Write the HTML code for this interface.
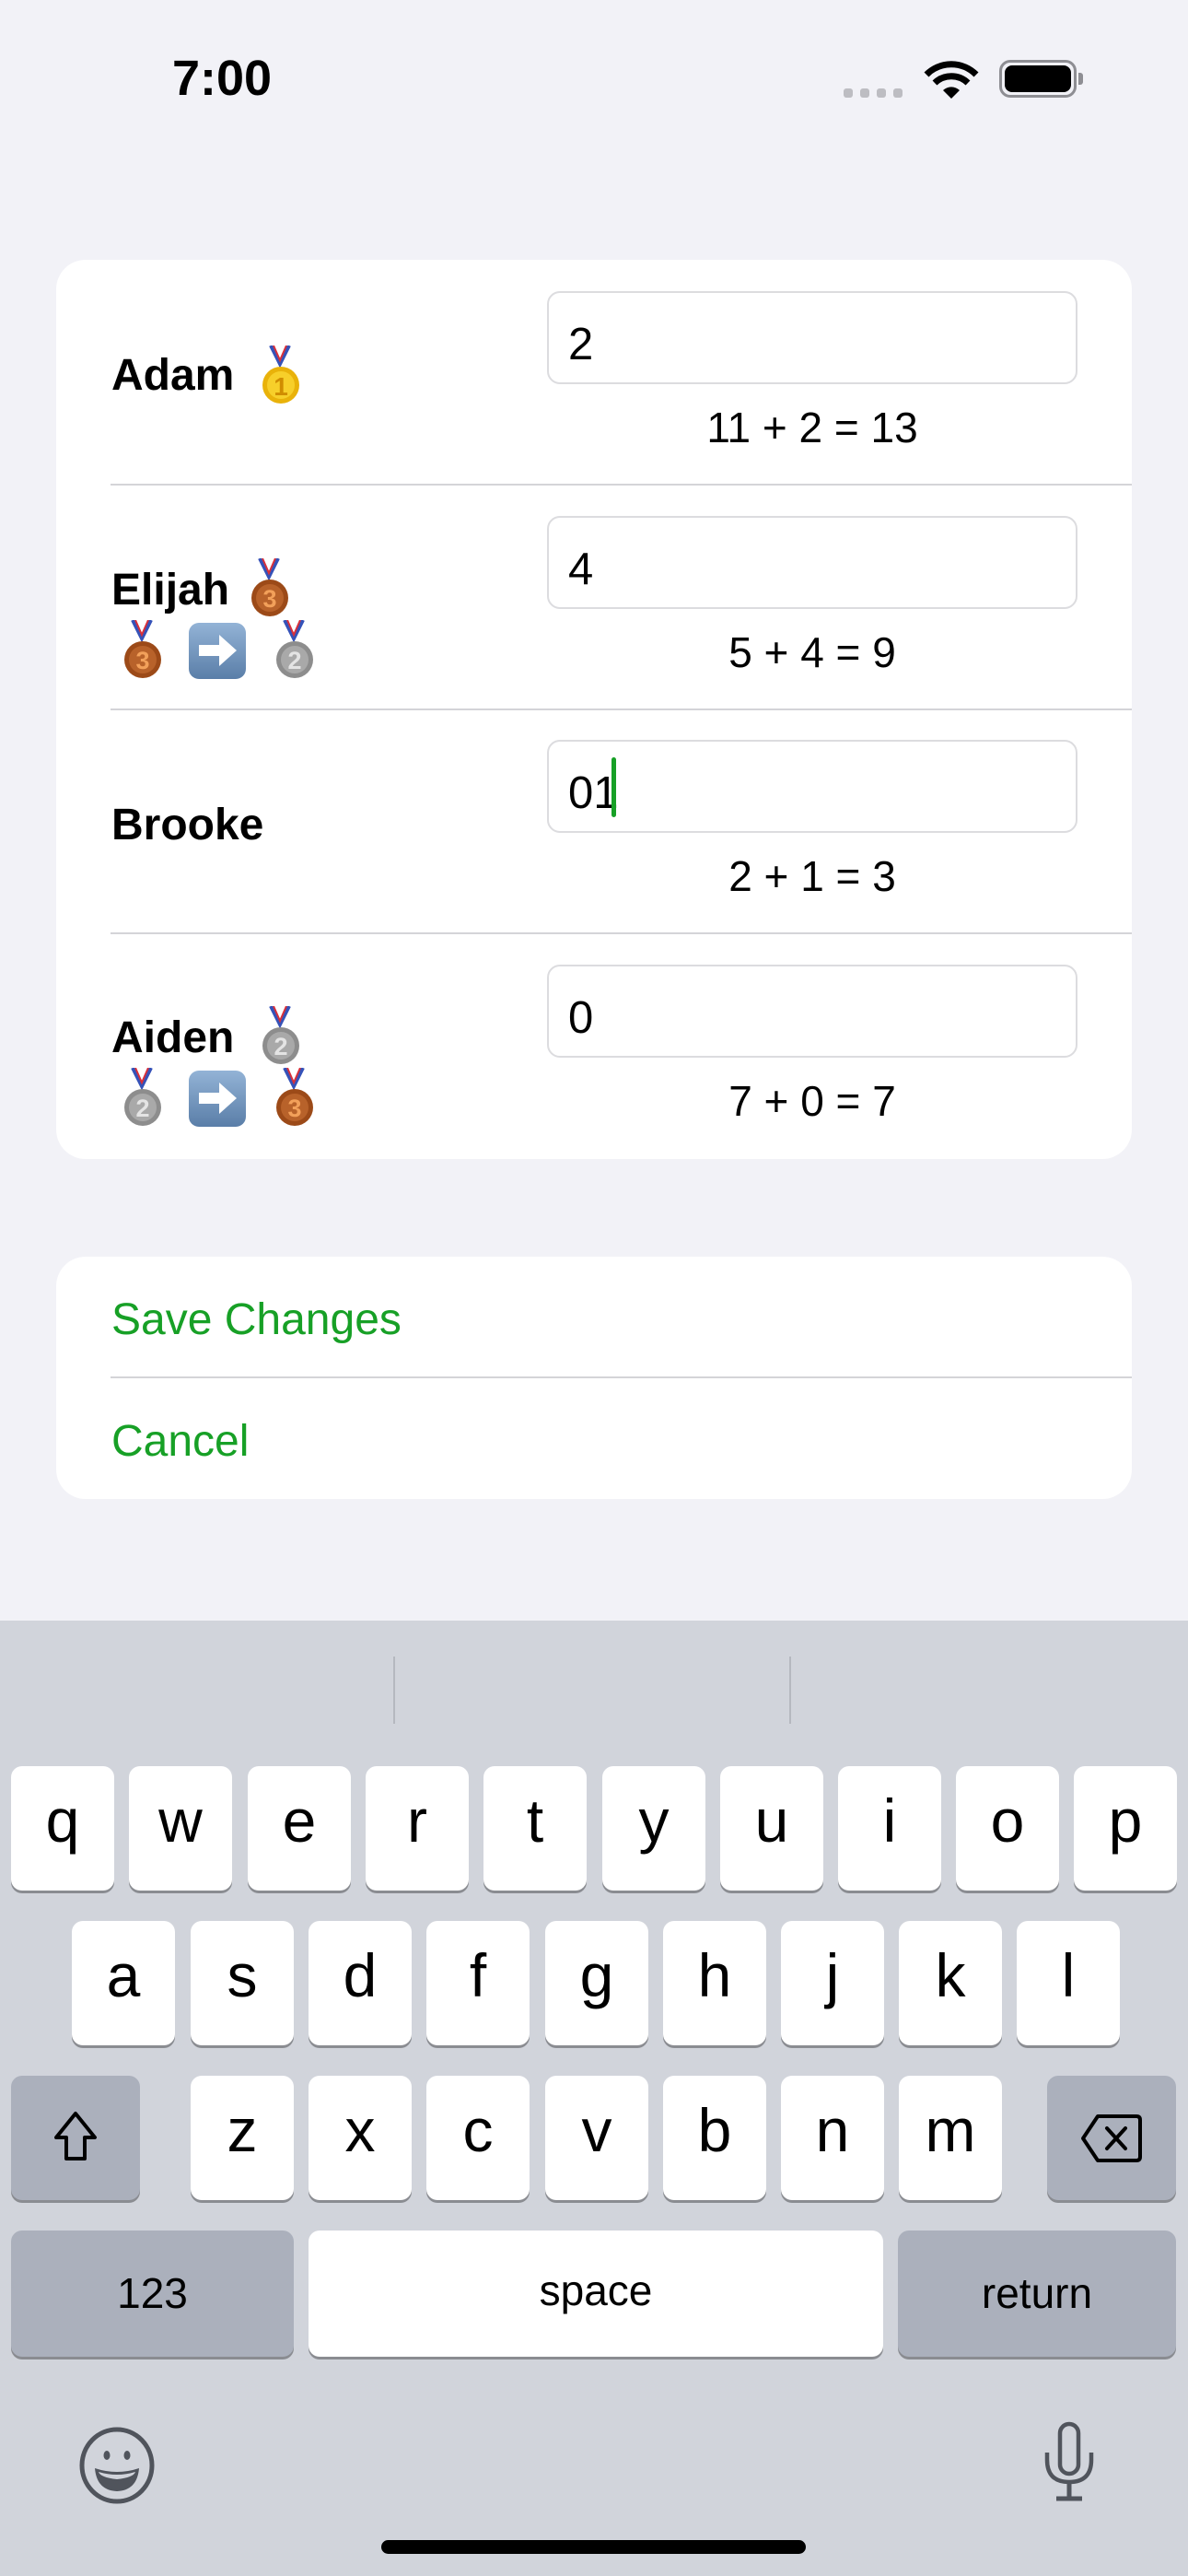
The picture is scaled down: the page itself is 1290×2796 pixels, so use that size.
<!DOCTYPE html>
<html><head><meta charset="utf-8"><style>
*{margin:0;padding:0;box-sizing:border-box}
body{width:1290px;height:2796px;background:#f2f2f7;position:relative;overflow:hidden;font-family:"Liberation Sans",sans-serif;color:#000}
.a{position:absolute}
.card{background:#fff;border-radius:32px}
.sep{position:absolute;height:2px;background:#d4d4d8}
.name{position:absolute;left:121px;font-size:48px;font-weight:bold;line-height:1}
.field{position:absolute;left:594px;width:576px;height:101px;border:2px solid #dcdcdf;border-radius:14px}
.ftxt{position:absolute;left:617px;font-size:49px;line-height:1}
.eq{position:absolute;left:594px;width:576px;text-align:center;font-size:46px;line-height:1}
.kb{position:absolute;left:0;top:1759px;width:1290px;height:1037px;background:#d1d4db}
.k{position:absolute;width:112px;height:135px;background:#fff;border-radius:12px;box-shadow:0 3px 0 #8a8c91;text-align:center;font-size:66px;line-height:118px}
.g{background:#abb0bc}
.btn{position:absolute;left:121px;font-size:48px;color:#17a026;line-height:1}
</style></head><body>
<div class="a" style="left:187px;top:58px;font-size:54px;font-weight:bold;line-height:1">7:00</div>
<div class="a" style="left:916px;top:96px;width:10px;height:10px;border-radius:3px;background:#bdbdc2"></div>
<div class="a" style="left:934px;top:96px;width:10px;height:10px;border-radius:3px;background:#bdbdc2"></div>
<div class="a" style="left:952px;top:96px;width:10px;height:10px;border-radius:3px;background:#bdbdc2"></div>
<div class="a" style="left:970px;top:96px;width:10px;height:10px;border-radius:3px;background:#bdbdc2"></div>
<svg class="a" style="left:1003px;top:64px" width="60" height="44" viewBox="0 0 60 44"><path d="M30 43 L21 34 A13 13 0 0 1 39 34 Z" fill="#000"/><path d="M12 26 A26 26 0 0 1 48 26" stroke="#000" stroke-width="7" fill="none"/><path d="M3 17 A38 38 0 0 1 57 17" stroke="#000" stroke-width="7" fill="none"/></svg>
<div class="a" style="left:1085px;top:65px;width:84px;height:41px;border:3px solid #8e8e93;border-radius:12px"></div>
<div class="a" style="left:1091px;top:71px;width:72px;height:29px;background:#000;border-radius:8px"></div>
<div class="a" style="left:1171px;top:79px;width:5px;height:13px;background:#8e8e93;border-radius:0 3px 3px 0"></div>

<div class="a card" style="left:61px;top:282px;width:1168px;height:976px"></div>
<div class="sep" style="left:120px;top:525px;width:1109px"></div>
<div class="sep" style="left:120px;top:769px;width:1109px"></div>
<div class="sep" style="left:120px;top:1012px;width:1109px"></div>

<div class="name" style="top:384px">Adam</div>
<div class="name" style="top:617px">Elijah</div>
<div class="name" style="top:872px">Brooke</div>
<div class="name" style="top:1103px">Aiden</div>

<div class="field" style="top:316px"></div><div class="ftxt" style="top:350px">2</div><div class="eq" style="top:441px">11 + 2 = 13</div>
<div class="field" style="top:560px"></div><div class="ftxt" style="top:594px">4</div><div class="eq" style="top:685px">5 + 4 = 9</div>
<div class="field" style="top:803px"></div><div class="ftxt" style="top:837px">01</div><div class="a" style="left:664px;top:822px;width:5px;height:65px;background:#17a026;border-radius:3px"></div><div class="eq" style="top:928px">2 + 1 = 3</div>
<div class="field" style="top:1047px"></div><div class="ftxt" style="top:1081px">0</div><div class="eq" style="top:1172px">7 + 0 = 7</div>

<svg width="0" height="0" style="position:absolute"><defs>
<g id="rib"><path d="M12 0 L22 20 L32 0" stroke="#3552b8" stroke-width="4" fill="none"/><path d="M17 0 L22 12 L27 0" stroke="#fff" stroke-width="3" fill="none"/><path d="M15 0 L22 16 L29 0" stroke="#d8303a" stroke-width="2" fill="none"/></g>
<linearGradient id="ab" x1="0" y1="0" x2="0" y2="1"><stop offset="0" stop-color="#93b3d6"/><stop offset="1" stop-color="#5a7ea8"/></linearGradient>
</defs></svg>
<svg class="a" style="left:282px;top:375px" width="46" height="66"><use href="#rib"/><circle cx="23" cy="43" r="20" fill="#e9b20a"/><circle cx="23" cy="43" r="15" fill="#f7cf2a"/><text x="23" y="54" text-anchor="middle" font-family="Liberation Sans" font-weight="bold" font-size="28" fill="#d08d00">1</text></svg>
<svg class="a" style="left:270px;top:606px" width="46" height="66"><use href="#rib"/><circle cx="23" cy="43" r="20" fill="#9c4a18"/><circle cx="23" cy="43" r="15" fill="#b8622a"/><text x="23" y="53" text-anchor="middle" font-family="Liberation Sans" font-weight="bold" font-size="27" fill="#f2a05a">3</text></svg>
<svg class="a" style="left:132px;top:673px" width="46" height="66"><use href="#rib"/><circle cx="23" cy="43" r="20" fill="#9c4a18"/><circle cx="23" cy="43" r="15" fill="#b8622a"/><text x="23" y="53" text-anchor="middle" font-family="Liberation Sans" font-weight="bold" font-size="27" fill="#f2a05a">3</text></svg>
<svg class="a" style="left:297px;top:673px" width="46" height="66"><use href="#rib"/><circle cx="23" cy="43" r="20" fill="#8d8d8d"/><circle cx="23" cy="43" r="15" fill="#a9a9a9"/><text x="23" y="53" text-anchor="middle" font-family="Liberation Sans" font-weight="bold" font-size="27" fill="#e4e4e4">2</text></svg>
<svg class="a" style="left:282px;top:1092px" width="46" height="66"><use href="#rib"/><circle cx="23" cy="43" r="20" fill="#8d8d8d"/><circle cx="23" cy="43" r="15" fill="#a9a9a9"/><text x="23" y="53" text-anchor="middle" font-family="Liberation Sans" font-weight="bold" font-size="27" fill="#e4e4e4">2</text></svg>
<svg class="a" style="left:132px;top:1159px" width="46" height="66"><use href="#rib"/><circle cx="23" cy="43" r="20" fill="#8d8d8d"/><circle cx="23" cy="43" r="15" fill="#a9a9a9"/><text x="23" y="53" text-anchor="middle" font-family="Liberation Sans" font-weight="bold" font-size="27" fill="#e4e4e4">2</text></svg>
<svg class="a" style="left:297px;top:1159px" width="46" height="66"><use href="#rib"/><circle cx="23" cy="43" r="20" fill="#9c4a18"/><circle cx="23" cy="43" r="15" fill="#b8622a"/><text x="23" y="53" text-anchor="middle" font-family="Liberation Sans" font-weight="bold" font-size="27" fill="#f2a05a">3</text></svg>
<svg class="a" style="left:204px;top:675px" width="64" height="63"><rect x="1" y="1" width="62" height="61" rx="11" fill="url(#ab)"/><path d="M12 25 H34 V14 L53 31 L34 48 V37 H12 Z" fill="#fff"/></svg>
<svg class="a" style="left:204px;top:1161px" width="64" height="63"><rect x="1" y="1" width="62" height="61" rx="11" fill="url(#ab)"/><path d="M12 25 H34 V14 L53 31 L34 48 V37 H12 Z" fill="#fff"/></svg>

<div class="a card" style="left:61px;top:1364px;width:1168px;height:263px"></div>
<div class="sep" style="left:120px;top:1494px;width:1109px"></div>
<div class="btn" style="top:1409px">Save Changes</div>
<div class="btn" style="top:1541px">Cancel</div>

<div class="kb"></div>
<div class="a" style="left:427px;top:1798px;width:2px;height:73px;background:#b5b8bf"></div>
<div class="a" style="left:857px;top:1798px;width:2px;height:73px;background:#b5b8bf"></div>

<div class="k" style="left:12px;top:1917px">q</div>
<div class="k" style="left:140px;top:1917px">w</div>
<div class="k" style="left:269px;top:1917px">e</div>
<div class="k" style="left:397px;top:1917px">r</div>
<div class="k" style="left:525px;top:1917px">t</div>
<div class="k" style="left:654px;top:1917px">y</div>
<div class="k" style="left:782px;top:1917px">u</div>
<div class="k" style="left:910px;top:1917px">i</div>
<div class="k" style="left:1038px;top:1917px">o</div>
<div class="k" style="left:1166px;top:1917px">p</div>

<div class="k" style="left:78px;top:2085px">a</div>
<div class="k" style="left:207px;top:2085px">s</div>
<div class="k" style="left:335px;top:2085px">d</div>
<div class="k" style="left:463px;top:2085px">f</div>
<div class="k" style="left:592px;top:2085px">g</div>
<div class="k" style="left:720px;top:2085px">h</div>
<div class="k" style="left:848px;top:2085px">j</div>
<div class="k" style="left:976px;top:2085px">k</div>
<div class="k" style="left:1104px;top:2085px">l</div>

<div class="k g" style="left:12px;top:2253px;width:140px"><svg width="70" height="60" viewBox="0 0 70 60" style="margin-top:37px"><path d="M35 4 L56 30 H45 V53 H25 V30 H14 Z" fill="none" stroke="#000" stroke-width="4" stroke-linejoin="round"/></svg></div>
<div class="k" style="left:207px;top:2253px">z</div>
<div class="k" style="left:335px;top:2253px">x</div>
<div class="k" style="left:463px;top:2253px">c</div>
<div class="k" style="left:592px;top:2253px">v</div>
<div class="k" style="left:720px;top:2253px">b</div>
<div class="k" style="left:848px;top:2253px">n</div>
<div class="k" style="left:976px;top:2253px">m</div>
<div class="k g" style="left:1137px;top:2253px;width:140px"><svg width="70" height="56" viewBox="0 0 70 56" style="margin-top:40px"><path d="M20 4 H62 Q66 4 66 8 V48 Q66 52 62 52 H20 L4 28 Z" fill="none" stroke="#000" stroke-width="4" stroke-linejoin="round"/><path d="M30 17 L50 39 M50 17 L30 39" stroke="#000" stroke-width="4" stroke-linecap="round"/></svg></div>

<div class="k g" style="left:12px;top:2421px;width:307px;height:137px;font-size:46px;line-height:137px">123</div>
<div class="k" style="left:335px;top:2421px;width:624px;height:137px;font-size:46px;line-height:130px">space</div>
<div class="k g" style="left:975px;top:2421px;width:302px;height:137px;font-size:46px;line-height:137px">return</div>

<svg class="a" style="left:85px;top:2633px" width="84" height="86" viewBox="0 0 84 86"><ellipse cx="42" cy="43" rx="38" ry="39" fill="none" stroke="#50545c" stroke-width="5"/><ellipse cx="31" cy="32" rx="3.5" ry="5" fill="#50545c"/><ellipse cx="53" cy="32" rx="3.5" ry="5" fill="#50545c"/><path d="M18 46 Q42 54 66 46 Q64 70 42 71 Q20 70 18 46 Z" fill="#50545c"/><path d="M22 50 Q42 56 62 50 Q60 56 42 58 Q24 56 22 50Z" fill="#d1d4db"/></svg>
<svg class="a" style="left:1132px;top:2628px" width="58" height="90" viewBox="0 0 58 90"><rect x="19" y="3" width="20" height="54" rx="10" fill="none" stroke="#50545c" stroke-width="4.5"/><path d="M5 34 V42 Q5 66 29 66 Q53 66 53 42 V34" fill="none" stroke="#50545c" stroke-width="4.5"/><path d="M29 66 V82 M15 84 H43" stroke="#50545c" stroke-width="5"/></svg>
<div class="a" style="left:414px;top:2757px;width:461px;height:15px;background:#000;border-radius:8px"></div>
</body></html>
